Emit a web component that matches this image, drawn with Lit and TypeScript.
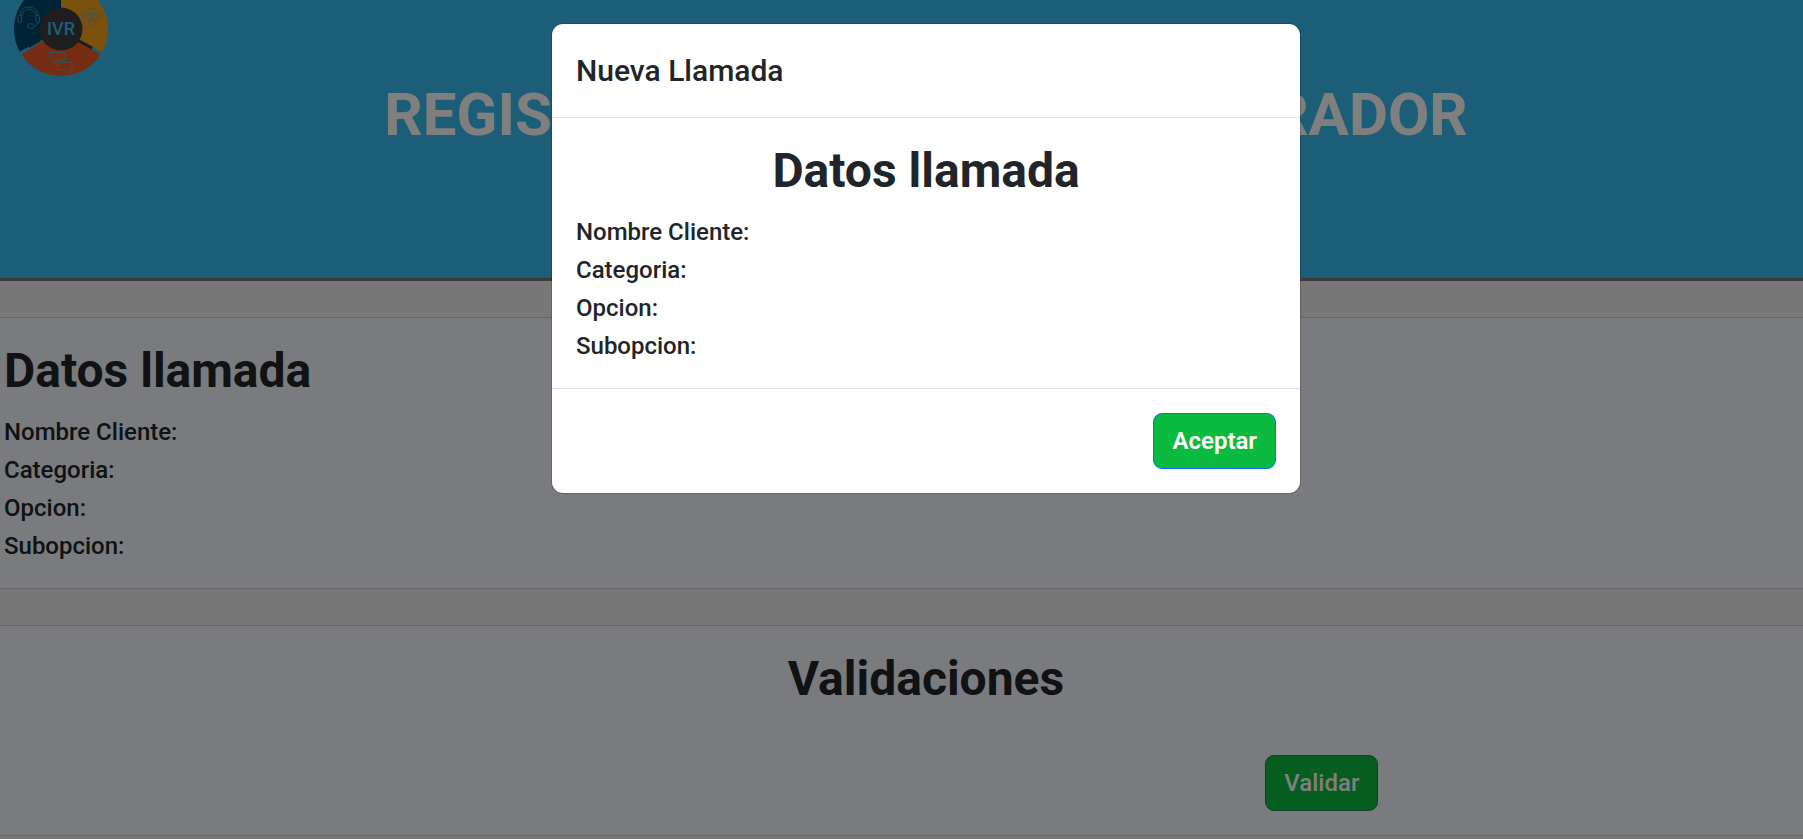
import { LitElement, html, css, svg } from "lit";
import { customElement } from "lit/decorators.js";

const FIELDS = ["Nombre Cliente:", "Categoria:", "Opcion:", "Subopcion:"];

const logo = svg`
  <path d="M47 29V-18A47 47 0 0 0 6.3 52.5Z" fill="#00456b"/>
  <path d="M47 29V-18A47 47 0 0 1 87.7 52.5Z" fill="#f9a31b"/>
  <path d="M47 29L7.500 54.500A47 47 0 0 0 86.500 54.500Z" fill="#ef5a28"/>
  <path d="M6.500 52.500L15.500 47.500" stroke="#38baee" stroke-width="2.500"/>
  <path d="M15 47.500L26 41" stroke="#3a3a3c" stroke-width="1"/>
  <path d="M64 40.500L79 48.500" stroke="#3a3a3c" stroke-width="3"/>
  <path d="M78 48L88 53" stroke="#38baee" stroke-width="2"/>
  <circle cx="47" cy="29" r="21.500" fill="#3c3c3e"/>
  <g fill="none" stroke="#2f93c2" stroke-width="1">
    <path d="M6 16C6 4 24 4 24 16M8 16C9 7 21 7 22 16"/>
    <rect x="4" y="15" width="3.500" height="7.500" rx="1.700"/>
    <rect x="22" y="15" width="3.500" height="7.500" rx="1.700"/>
    <path d="M24 22.500C23.500 25 22 26 20 26"/>
    <ellipse cx="17" cy="26" rx="3.500" ry="2.300"/>
  </g>
  <g fill="none" stroke="#8fa58a" stroke-width="1">
    <path d="M66 14Q78 3 90 14L88 16.500Q78 8 68 16.500Z"/>
    <path d="M70 18Q78 11 86 18L84 20.500Q78 15 72 20.500Z"/>
    <path d="M74 22Q78 18.500 82 22L78 26.500Z"/>
  </g>
  <g fill="none" stroke="#7f9aa4" stroke-width="1">
    <path d="M36.500 52.500H50.500V60H42L40.500 64L39.500 60H36.500Z"/>
    <path d="M52 62.500H58V70H55.500L54.500 73.500L52 70H43.500V62.500Z"/>
  </g>
  <text class="mark" x="47" y="35" text-anchor="middle">IVR</text>
`;

const shared = css`
  * { box-sizing: border-box; }
  h1, h2, p { margin: 0; }
  .heading { font-size: 48px; line-height: 58px; font-weight: 700; }
  .btn {
    font: 500 24px/36px Roboto, sans-serif;
    color: #fff;
    background: #0abb3f;
    border: 1px solid #198754;
    border-radius: 9px;
    padding: 9px 18px;
  }
  .btn-strong { font-weight: 600; border-color: #0d6efd; }
`;

@customElement("call-data")
class CallData extends LitElement {
  static styles = [shared, css`
    :host { display: block; }
    .heading { margin-bottom: 12px; }
    :host([centered]) .heading { text-align: center; }
    .field { padding-top: 2px; font-size: 24px; line-height: 36px; font-weight: 500; }
  `];
  render() {
    return html`
      <h2 class="heading">Datos llamada</h2>
      ${FIELDS.map((f) => html`<p class="field">${f}</p>`)}
    `;
  }
}

@customElement("app-root")
class AppRoot extends LitElement {
  static styles = [shared, css`
    :host {
      display: block;
      position: relative;
      height: 100vh;
      overflow: hidden;
      font-family: Roboto, sans-serif;
      color: #212529;
      background: #f0f1f2;
      --bleed: 49px;
    }
    .page { width: calc(100% + var(--bleed)); }
    .banner { background: #38baee; border-bottom: 3px solid #7a7474; padding-bottom: 127px; }
    .logo { display: block; width: 94px; height: 79px; margin-left: 14px; }
    .mark { font: 500 18px Roboto, sans-serif; fill: #38baee; }
    .title { color: #fff; text-align: center; font-size: 60px; line-height: 72px; font-weight: 700; }
    .card {
      margin-top: 36px;
      padding: 24px 4px;
      background: #f4f6ff;
      border: solid #c8ccd4;
      border-width: 1px 0;
    }
    .checks { text-align: center; }
    .actions { display: grid; grid-template-columns: 2fr 1fr; margin-top: 47px; }
    .actions .btn { grid-column: 2; justify-self: start; margin-left: 32px; }
    .backdrop {
      position: absolute;
      inset: 0;
      background: rgba(0, 0, 0, 0.5);
    }
    .layer { position: absolute; inset: 0 calc(var(--bleed) * -1) auto 0; padding-top: 23px; }
    .modal {
      max-width: 750px;
      margin: 0 auto;
      background: #fff;
      background-clip: padding-box;
      border: 1px solid rgba(0, 0, 0, 0.175);
      border-radius: 12px;
    }
    .modal-head { padding: 24px; border-bottom: 1px solid #dee2e6; }
    .modal-title { font-size: 30px; line-height: 45px; font-weight: 500; }
    .modal-body { padding: 24px; }
    .modal-foot { display: flex; justify-content: flex-end; padding: 24px; border-top: 1px solid #dee2e6; }
  `];
  render() {
    return html`
      <div class="page">
        <header class="banner">
          <svg class="logo" viewBox="0 0 94 79" role="img" aria-label="IVR">${logo}</svg>
          <h1 class="title">REGISTRO DE LLAMADAS A OPERADOR</h1>
        </header>
        <section class="card"><call-data></call-data></section>
        <section class="card checks">
          <h2 class="heading">Validaciones</h2>
          <div class="actions"><button class="btn" type="button">Validar</button></div>
        </section>
      </div>
      <div class="backdrop"></div>
      <div class="layer">
        <div class="modal" role="dialog" aria-modal="true" aria-labelledby="modal-title">
          <div class="modal-head"><h2 class="modal-title" id="modal-title">Nueva Llamada</h2></div>
          <div class="modal-body"><call-data centered></call-data></div>
          <div class="modal-foot"><button class="btn btn-strong" type="button">Aceptar</button></div>
        </div>
      </div>
    `;
  }
}
